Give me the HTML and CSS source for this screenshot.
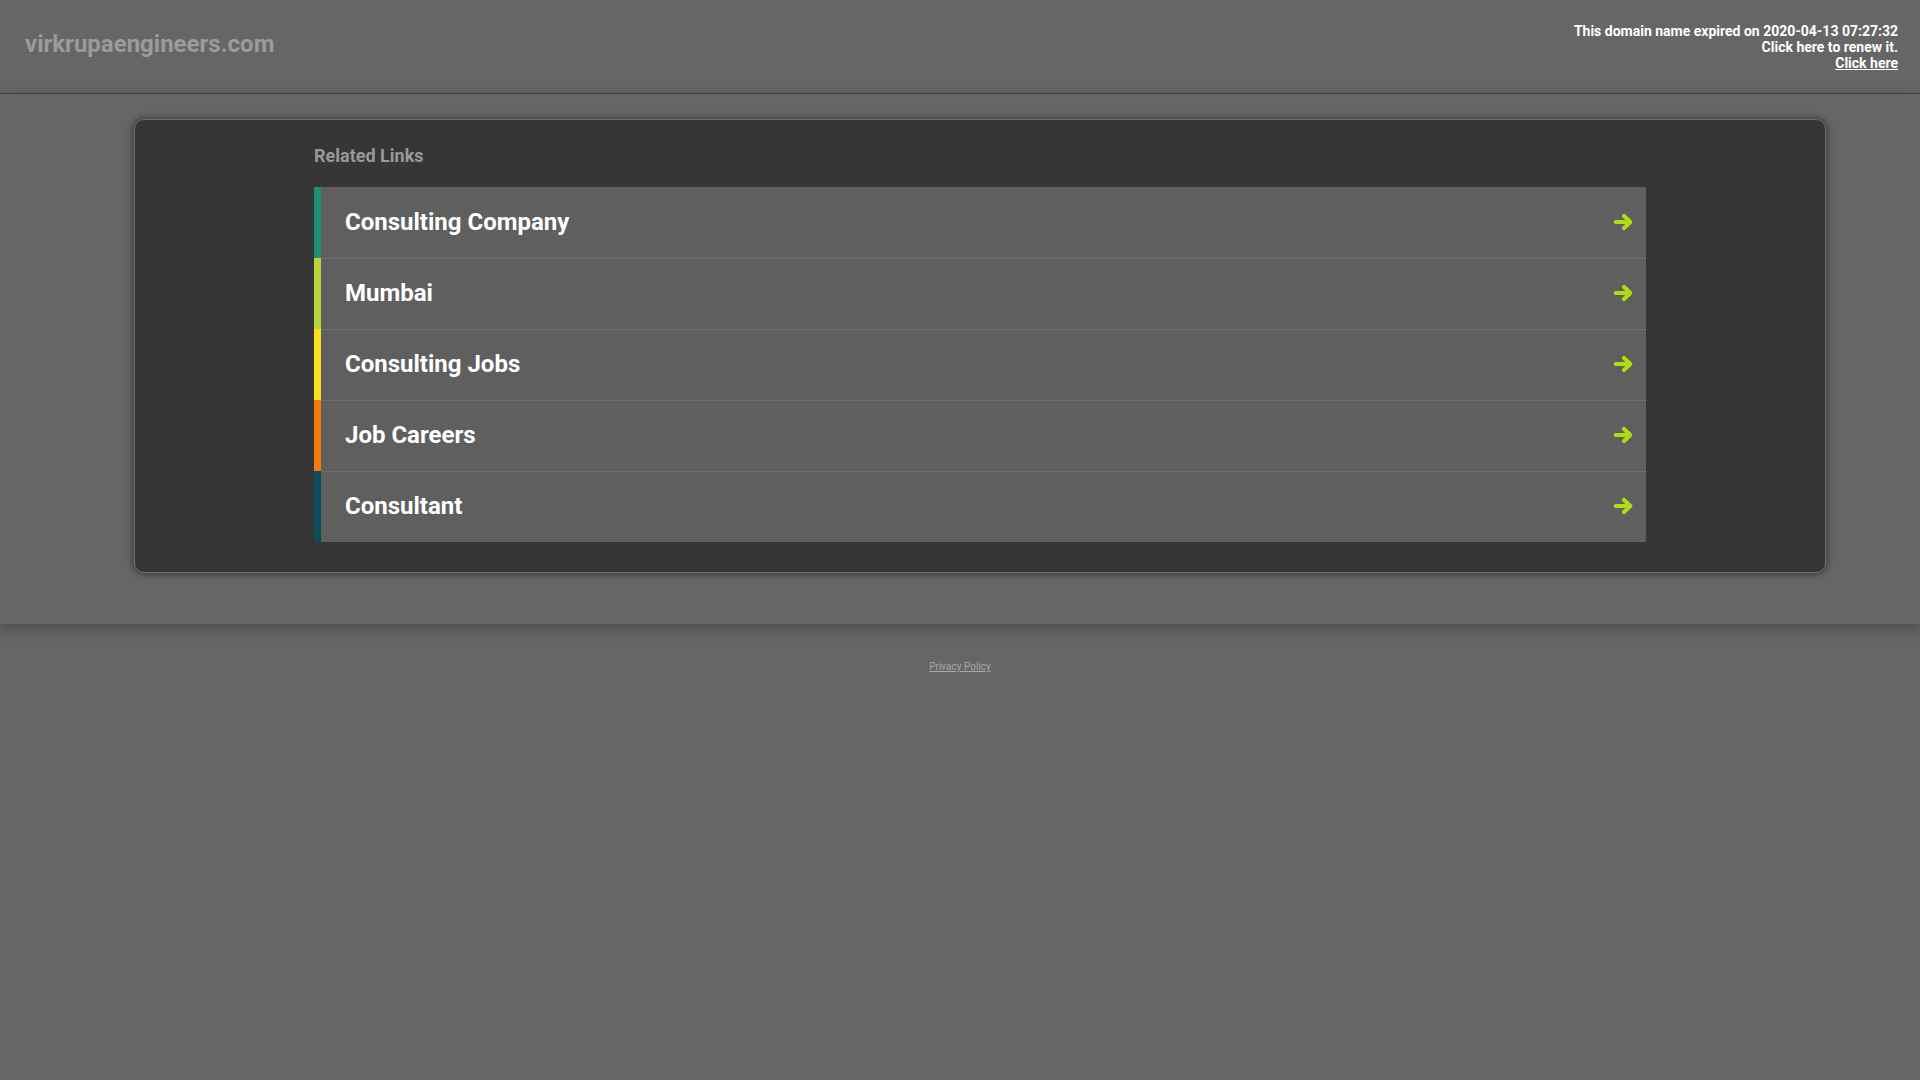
FILE: index.html
```html
<!DOCTYPE html>
<html lang="en">
<head>
<meta charset="utf-8">
<title>virkrupaengineers.com</title>
<link rel="stylesheet" href="styles.css">
</head>
<body>
<header class="top">
  <div class="domain">virkrupaengineers.com</div>
  <div class="notice">
    <div>This domain name expired on 2020-04-13 07:27:32</div>
    <div>Click here to renew it.</div>
    <div><a href="#" class="notice-link">Click here</a></div>
  </div>
</header>
<main class="main">
  <section class="card">
    <div class="inner">
      <h2 class="title">Related Links</h2>
      <ul class="links">
        <li class="row c1"><span class="label">Consulting Company</span><svg class="arrow" viewBox="0 0 20 16"><path d="M2.5 8H15.5M10 2.5L15.8 8L10 13.5"/></svg></li>
        <li class="row c2"><span class="label">Mumbai</span><svg class="arrow" viewBox="0 0 20 16"><path d="M2.5 8H15.5M10 2.5L15.8 8L10 13.5"/></svg></li>
        <li class="row c3"><span class="label">Consulting Jobs</span><svg class="arrow" viewBox="0 0 20 16"><path d="M2.5 8H15.5M10 2.5L15.8 8L10 13.5"/></svg></li>
        <li class="row c4"><span class="label">Job Careers</span><svg class="arrow" viewBox="0 0 20 16"><path d="M2.5 8H15.5M10 2.5L15.8 8L10 13.5"/></svg></li>
        <li class="row c5"><span class="label">Consultant</span><svg class="arrow" viewBox="0 0 20 16"><path d="M2.5 8H15.5M10 2.5L15.8 8L10 13.5"/></svg></li>
      </ul>
    </div>
  </section>
</main>
<footer class="foot">
  <a href="#" class="privacy">Privacy Policy</a>
</footer>
</body>
</html>
```
FILE: styles.css
```css
* { box-sizing: border-box; }
html, body { margin: 0; padding: 0; }
body {
  background: #666666;
  font-family: Roboto, "Liberation Sans", Arial, sans-serif;
  min-height: 1080px;
}
.top {
  height: 94px;
  display: flex;
  justify-content: space-between;
  align-items: flex-start;
  border-bottom: 1px solid #474747;
  background: #666666;
}
.domain {
  padding-left: 25px;
  padding-top: 28px;
  font-size: 24px;
  font-weight: 700;
  color: #9b9b9b;
  line-height: 32px;
}
.notice {
  padding-top: 23px;
  padding-right: 22px;
  text-align: right;
  color: #ffffff;
  font-size: 14px;
  font-weight: 700;
  line-height: 16px;
}
.notice-link { color: #ffffff; text-decoration: underline; }
.main {
  background: #666666;
  padding: 25px 94px 51px 134px;
  box-shadow: 0 4px 14px rgba(0,0,0,0.28);
  position: relative;
  z-index: 1;
}
.card {
  background: #363636;
  border: 1px solid #707070;
  border-radius: 10px;
  box-shadow: 0 0 7px 1px rgba(0,0,0,0.45);
  padding: 0 0 30px;
}
.inner {
  width: 1332px;
  margin: 0 auto;
}
.title {
  margin: 0;
  padding-top: 24px;
  height: 67px;
  font-size: 18px;
  font-weight: 700;
  color: #999999;
  line-height: 24px;
}
.links { list-style: none; margin: 0; padding: 0; }
.row {
  height: 71px;
  display: flex;
  align-items: center;
  justify-content: space-between;
  background: #5f5f5f;
  border-left: 7px solid #1d8c6c;
  padding: 0 11px 1px 24px;
}
.row + .row { box-shadow: inset 0 1px 0 #6f6f6f; }
.c1 { border-left-color: #1f8f72; }
.c2 { border-left-color: #b8d43a; }
.c3 { border-left-color: #f6df1d; }
.c4 { border-left-color: #f57a0c; }
.c5 { border-left-color: #0c4c5d; }
.label {
  font-size: 24px;
  font-weight: 700;
  color: #ffffff;
}
.arrow {
  width: 22px;
  height: 18px;
}
.arrow path {
  fill: none;
  stroke: #b2dc12;
  stroke-width: 3.6;
  stroke-linecap: round;
  stroke-linejoin: round;
}
.foot {
  text-align: center;
  padding-top: 31px;
}
.privacy {
  font-size: 10px;
  color: #a9a9a9;
  text-decoration: underline;
}
```
